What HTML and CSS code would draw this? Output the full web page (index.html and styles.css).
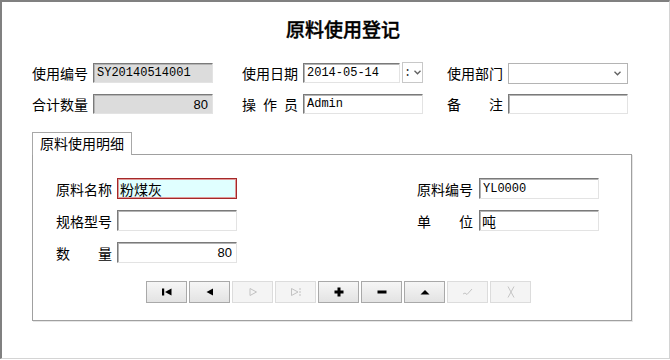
FILE: index.html
```html
<!DOCTYPE html>
<html lang="zh-CN">
<head>
    <meta charset="UTF-8">
    <title>原料使用登记</title>
    <link rel="stylesheet" href="styles.css">
</head>
<body>

<div class="window">
    <h1 class="title">原料使用登记</h1>

    <!-- header fields -->
    <div class="head-form">
        <div class="field">
            <label>使用编号</label>
            <input class="text readonly" value="SY20140514001" readonly>
        </div>
        <div class="field">
            <label>使用日期</label>
            <div class="date">
                <input class="text" value="2014-05-14">
                <div class="date-btn">
                    <span class="colon">:</span>
                    <svg width="7" height="5" viewBox="0 0 7 5"><polyline points="0.5,0.8 3.5,3.8 6.5,0.8" fill="none" stroke="#606060" stroke-width="1.3"/></svg>
                </div>
            </div>
        </div>
        <div class="field">
            <label>使用部门</label>
            <div class="select">
                <svg width="7" height="5" viewBox="0 0 7 5"><polyline points="0.5,0.8 3.5,3.8 6.5,0.8" fill="none" stroke="#606060" stroke-width="1.3"/></svg>
            </div>
        </div>

        <div class="field">
            <label>合计数量</label>
            <input class="text readonly num" value="80" readonly>
        </div>
        <div class="field">
            <label>操作员</label>
            <input class="text" value="Admin">
        </div>
        <div class="field">
            <label>备注</label>
            <input class="text" value="">
        </div>
    </div>

    <!-- detail tab -->
    <div class="tabs">
        <div class="tab">原料使用明细</div>
        <div class="tab-panel">
            <div class="detail-form">
                <div class="field">
                    <label>原料名称</label>
                    <input class="text active cjk" value="粉煤灰">
                </div>
                <div class="field">
                    <label>原料编号</label>
                    <input class="text" value="YL0000">
                </div>
                <div class="field">
                    <label>规格型号</label>
                    <input class="text" value="">
                </div>
                <div class="field">
                    <label>单位</label>
                    <input class="text cjk" value="吨">
                </div>
                <div class="field">
                    <label>数量</label>
                    <input class="text num" value="80">
                </div>
            </div>

            <div class="nav-bar">
                <button class="nav-btn" title="First">
                    <svg width="14" height="12" viewBox="0 0 14 12"><rect x="2" y="2.5" width="2.2" height="7"/><polygon points="11.5,2.5 11.5,9.5 5,6"/></svg>
                </button>
                <button class="nav-btn" title="Prior">
                    <svg width="14" height="12" viewBox="0 0 14 12"><polygon points="10,2.5 10,9.5 3.5,6"/></svg>
                </button>
                <button class="nav-btn" title="Next" disabled>
                    <svg width="14" height="12" viewBox="0 0 14 12"><polygon points="4,2.5 4,9.5 10.5,6" fill="none" stroke="#c2c2c2"/></svg>
                </button>
                <button class="nav-btn" title="Last" disabled>
                    <svg width="14" height="12" viewBox="0 0 14 12"><polygon points="2.5,2.5 2.5,9.5 9,6" fill="none" stroke="#c2c2c2"/><line x1="11" y1="2" x2="11" y2="10" stroke="#c2c2c2" stroke-dasharray="2 1"/></svg>
                </button>
                <button class="nav-btn" title="Insert">
                    <svg width="14" height="12" viewBox="0 0 14 12"><path d="M5.5 1.5h3v3h3v3h-3v3h-3v-3h-3v-3h3z"/></svg>
                </button>
                <button class="nav-btn" title="Delete">
                    <svg width="14" height="12" viewBox="0 0 14 12"><rect x="2.5" y="4.5" width="9" height="3"/></svg>
                </button>
                <button class="nav-btn" title="Edit">
                    <svg width="14" height="12" viewBox="0 0 14 12"><polygon points="2.5,8.5 11.5,8.5 7,4"/></svg>
                </button>
                <button class="nav-btn" title="Post" disabled>
                    <svg width="14" height="12" viewBox="0 0 14 12"><polyline points="2,8 4,7 6,8.5 11,3" fill="none" stroke="#c4c4c4"/></svg>
                </button>
                <button class="nav-btn" title="Cancel" disabled>
                    <svg width="14" height="14" viewBox="0 0 14 14"><path d="M4 1.5 L10 12.5 M10 1.5 L4 12.5" fill="none" stroke="#c4c4c4"/></svg>
                </button>
            </div>
        </div>
    </div>
</div>

</body>
</html>
```

FILE: styles.css
```css
body {
    margin: 0;
    background: #ffffff;
}
.window {
    width: 670px;
    height: 359px;
    box-sizing: border-box;
    border-top: 2px solid #808080;
    border-left: 2px solid #808080;
    border-right: 1px solid #d4d4d4;
    border-bottom: 1px solid #d4d4d4;
    padding: 15px 0 0 30px;
    font-family: "Noto Sans CJK SC", sans-serif;
    font-size: 14px;
    color: #000000;
}
.title {
    margin: 0;
    padding-right: 15px;
    font-size: 19px;
    font-weight: 500;
    line-height: 24px;
    text-align: center;
    -webkit-text-stroke: 0.4px #000000;
}
/* header form */
.head-form {
    display: grid;
    grid-template-columns: 210px 205px 182px;
    grid-auto-rows: 20px;
    row-gap: 11px;
    margin-top: 22px;
}
.field {
    display: flex;
    align-items: center;
    gap: 5px;
}
.field label {
    width: 56px;
    text-align: justify;
    text-align-last: justify;
    white-space: nowrap;
    line-height: 20px;
}
.text {
    box-sizing: border-box;
    width: 120px;
    height: 20px;
    margin: 0;
    padding: 0 3px;
    border: 1px solid;
    border-color: #7a7a7a #e3e3e3 #e3e3e3 #7a7a7a;
    box-shadow: inset 1px 1px 0 #b4b4b4;
    background: #ffffff;
    font-family: "Liberation Mono", monospace;
    font-size: 12px;
    color: #000000;
    outline: none;
}
.text.readonly {
    background: #dcdcdc;
}
.text.num {
    text-align: right;
    padding-right: 4px;
    font-family: "Liberation Sans", sans-serif;
    font-size: 13px;
}
.text.cjk {
    font-family: "Noto Sans CJK SC", sans-serif;
    font-size: 14px;
    padding-left: 2px;
}
.text.active {
    border: 1px solid #a52828;
    box-shadow: inset 0 0 0 1px #e09a9a;
    background: #e0ffff;
}
.date {
    display: flex;
    gap: 2px;
}
.date .text {
    width: 97px;
}
.date-btn {
    box-sizing: border-box;
    width: 21px;
    height: 21px;
    margin-top: -1px;
    border: 1px solid #c8c8c8;
    display: flex;
    align-items: center;
    justify-content: center;
    gap: 3px;
}
.date-btn .colon {
    font-family: "Liberation Mono", monospace;
    font-size: 12px;
    line-height: 12px;
    color: #303030;
}
.select {
    box-sizing: border-box;
    width: 120px;
    height: 21px;
    border: 1px solid #b4b4b4;
    display: flex;
    align-items: center;
    justify-content: flex-end;
    padding-right: 6px;
}
/* tab + panel */
.tabs {
    margin-top: 18px;
}
.tab {
    position: relative;
    width: 100px;
    height: 23px;
    box-sizing: border-box;
    margin-bottom: -1px;
    padding-left: 7px;
    border: 1px solid #a8a8a8;
    border-bottom: none;
    background: #ffffff;
    line-height: 21px;
}
.tab-panel {
    width: 600px;
    box-sizing: border-box;
    padding: 23px 0 17px 23px;
    border: 1px solid #a0a0a0;
    box-shadow: 1px 1px 0 #e6e6e6;
}
.detail-form {
    display: grid;
    grid-template-columns: 361px auto;
    grid-auto-rows: 21px;
    row-gap: 11px;
}
.detail-form .text {
    height: 21px;
}
.detail-form .field:nth-child(even) {
    gap: 6px;
}
.nav-bar {
    display: flex;
    gap: 2px;
    margin-top: 18px;
    padding-left: 90px;
}
.nav-btn {
    width: 41px;
    height: 22px;
    box-sizing: border-box;
    padding: 0;
    border: 1px solid #a9a9a9;
    background: linear-gradient(#f6f6f6, #e3e3e3);
    display: flex;
    align-items: center;
    justify-content: center;
}
.nav-btn:disabled {
    border-color: #dcdcdc;
    background: #f4f4f4;
}
```
